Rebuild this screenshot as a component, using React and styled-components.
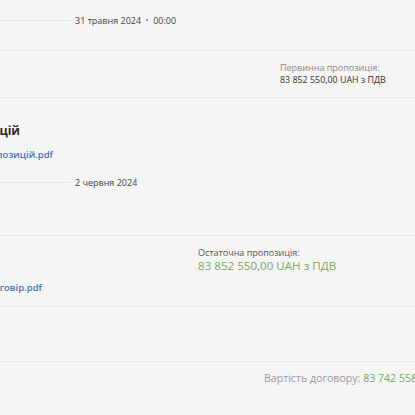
import React from "react";
import styled, { createGlobalStyle } from "styled-components";

const Global = createGlobalStyle`
  html, body { margin: 0; padding: 0; background: #f5f5f5; }
  body { font-family: "Open Sans", "Noto Sans", sans-serif; overflow: hidden; }
`;

const Page = styled.div`
  width: 415px;
  height: 415px;
  overflow: hidden;
  background: #f5f5f5;
`;

const Inner = styled.div`
  margin-left: -120px;
  width: 560px;
  display: flex;
  flex-direction: column;
`;

const Section = styled.div`
  border-bottom: 1px solid #e6e6e6;
  padding: ${(p) => p.$pad || "0"};
  height: ${(p) => p.$h};
  box-sizing: border-box;
  display: flex;
  flex-direction: column;
`;

const TimeRow = styled.div`
  display: flex;
  align-items: center;
  gap: 5px;
  height: 18px;
  margin-top: ${(p) => p.$mt || "0"};
`;

const TimeLine = styled.div`
  width: 190px;
  height: 1px;
  background: linear-gradient(to right, rgba(225,225,225,0), #e4e4e4 60%);
`;

const DateText = styled.span`
  font-size: 9px;
  color: #444;
  display: flex;
  align-items: center;
  gap: 5px;
`;

const Dot = styled.span`
  width: 2px;
  height: 2px;
  border-radius: 50%;
  background: #5c6fa8;
`;

const Offer = styled.div`
  display: flex;
  flex-direction: column;
  margin-left: ${(p) => p.$ml};
`;

const Label = styled.span`
  font-size: 9px;
  color: ${(p) => (p.$dark ? "#555" : "#8a8a8a")};
  line-height: 12px;
  white-space: nowrap;
`;

const Value = styled.span`
  font-size: ${(p) => (p.$big ? "11.6px" : "8.9px")};
  color: ${(p) => (p.$green ? "#7ba75d" : "#333")};
  line-height: ${(p) => (p.$big ? "14px" : "12px")};
  white-space: nowrap;
`;

const EndBox = styled.div`
  width: ${(p) => p.$w};
  display: flex;
  justify-content: flex-end;
  margin-top: ${(p) => p.$mt || "0"};
`;

const Title = styled.h3`
  margin: 0;
  white-space: nowrap;
  flex-shrink: 0;
  font-size: 12px;
  font-weight: 700;
  color: #2b2b2b;
  line-height: 17px;
`;

const FileLink = styled.a`
  font-size: 9.5px;
  font-weight: 600;
  color: #3f73b8;
  text-decoration: none;
  white-space: nowrap;
  flex-shrink: 0;
`;

const Cost = styled.div`
  margin-left: 384px;
  margin-top: 9px;
  font-size: 10.6px;
  color: #9a9a9a;
  white-space: nowrap;
`;

const Green = styled.span`
  color: #7ba75d;
`;

export default function App() {
  return (
    <Page>
      <Global />
      <Inner>
        <Section $h="51px" $pad="11px 0 0 0">
          <TimeRow>
            <TimeLine />
            <DateText>
              31 травня 2024 <Dot /> 00:00
            </DateText>
          </TimeRow>
        </Section>
        <Section $h="47px" $pad="11px 0 0 0">
          <Offer $ml="400px">
            <Label>Первинна пропозиція:</Label>
            <Value>83 852 550,00 UAH з ПДВ</Value>
          </Offer>
        </Section>
        <Section $h="138px">
          <EndBox $w="140px" $mt="24px">
            <Title>Реєстр пропозицій</Title>
          </EndBox>
          <EndBox $w="173px" $mt="9px">
            <FileLink href="#">Реєстр пропозицій.pdf</FileLink>
          </EndBox>
          <TimeRow $mt="12px">
            <TimeLine />
            <DateText>2 червня 2024</DateText>
          </TimeRow>
        </Section>
        <Section $h="71px" $pad="11px 0 0 0">
          <Offer $ml="318px">
            <Label $dark>Остаточна пропозиція:</Label>
            <Value $big $green>83 852 550,00 UAH з ПДВ</Value>
          </Offer>
          <EndBox $w="162px" $mt="8px">
            <FileLink href="#">Договір.pdf</FileLink>
          </EndBox>
        </Section>
        <Section $h="55px" />
        <Cost>
          Вартість договору: <Green>83 742 558,00 UAH з ПДВ</Green>
        </Cost>
      </Inner>
    </Page>
  );
}
